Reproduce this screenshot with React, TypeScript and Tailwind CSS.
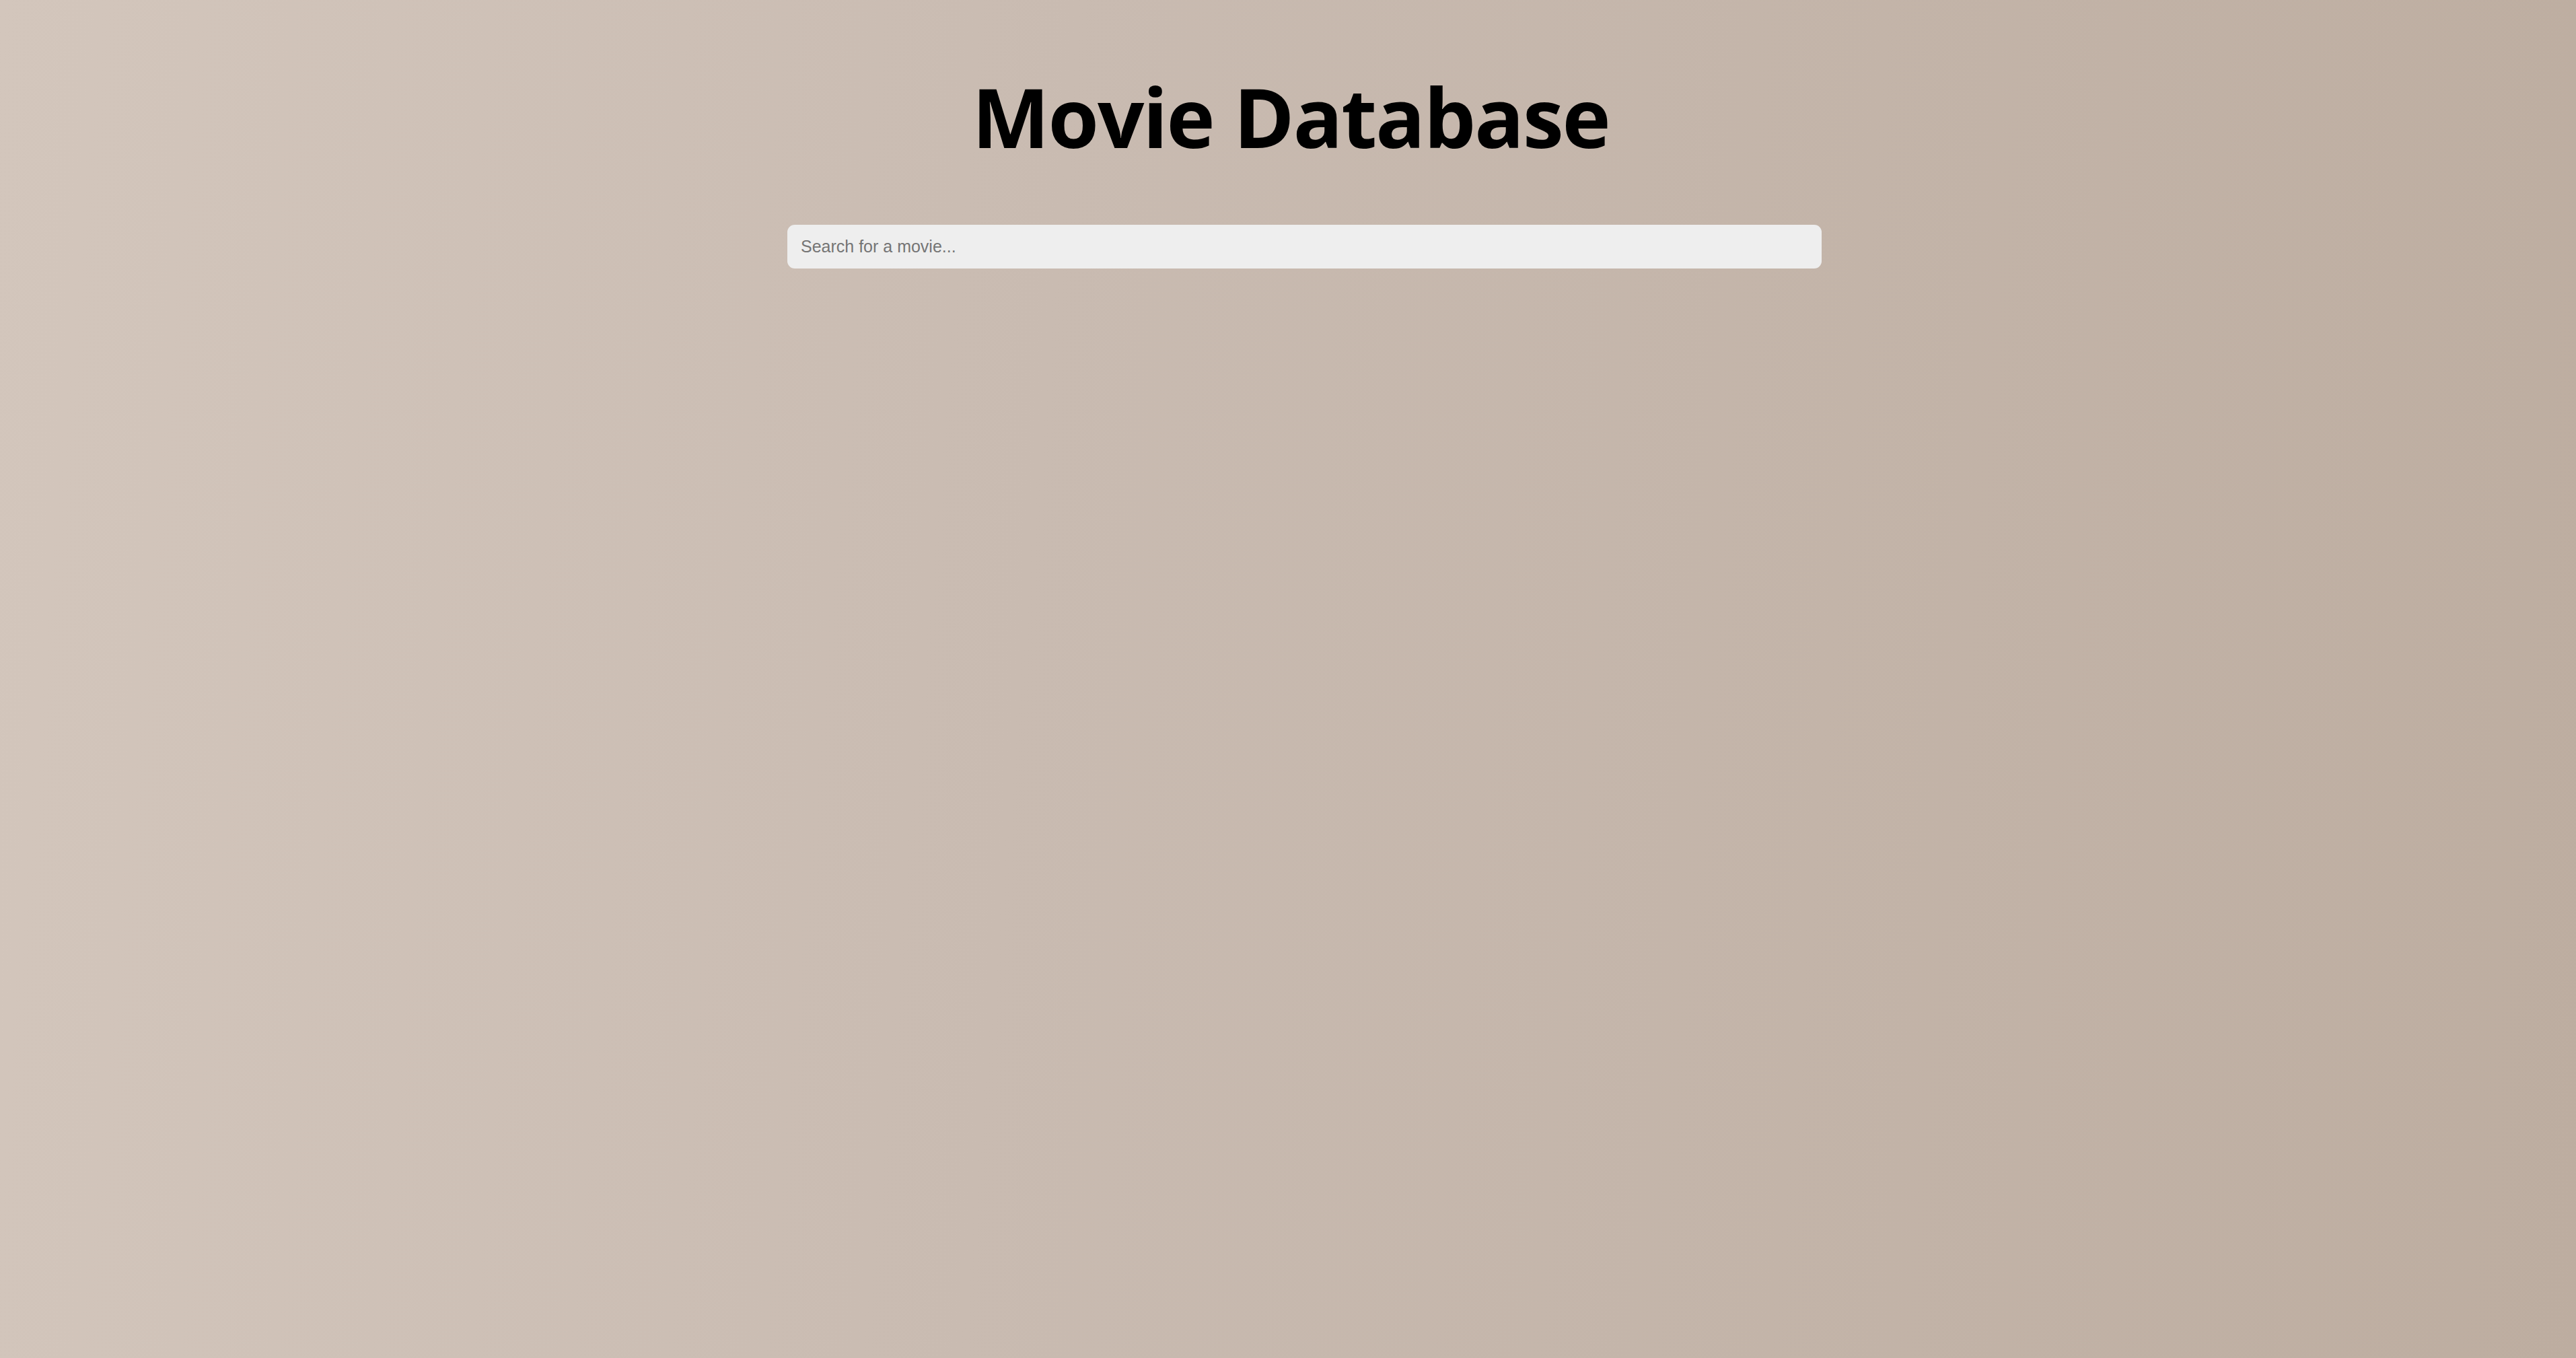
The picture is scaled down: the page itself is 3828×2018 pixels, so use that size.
import React, { useState } from "react";

const App: React.FC = () => {
  const [query, setQuery] = useState("");

  return (
    <div className="min-h-screen w-full bg-[linear-gradient(95deg,#d3c6bc_0%,#c9bbb1_40%,#bdada0_100%)]">
      <div className="flex flex-col items-center pt-[98px]">
        <h1 className="ml-[8px] text-[122px] leading-[150px] font-bold tracking-[-2px] text-black font-['Open_Sans',sans-serif]">
          Movie Database
        </h1>
        <div className="w-full flex justify-center mt-[86px]">
          <input
            type="text"
            value={query}
            onChange={(e) => setQuery(e.target.value)}
            placeholder="Search for a movie..."
            className="ml-[49px] w-[1537px] h-[65px] px-[20px] rounded-[11px] bg-[#eeeeee] text-[25px] text-gray-800 placeholder:text-[#757575] outline-none font-['Liberation_Sans',Arial,sans-serif]"
          />
        </div>
      </div>
    </div>
  );
};

export default App;
